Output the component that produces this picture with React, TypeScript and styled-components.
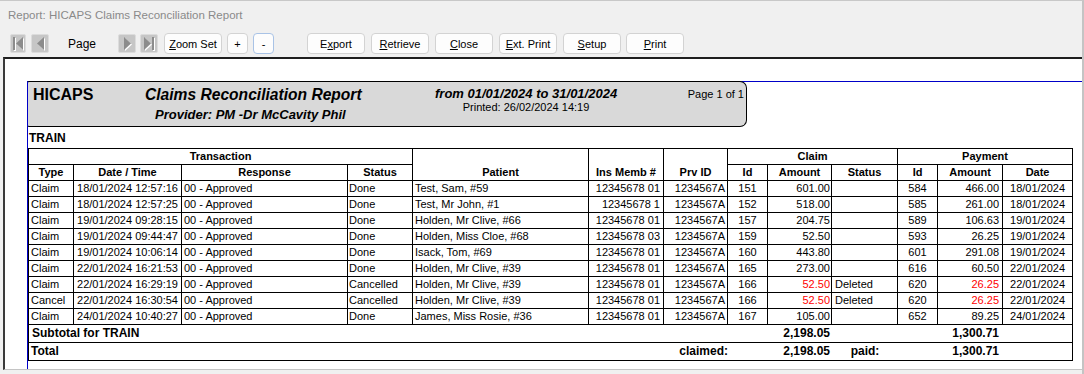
import React from 'react';
import styled, { createGlobalStyle } from 'styled-components';

const Global = createGlobalStyle`
  html, body { margin: 0; padding: 0; background: #f0f0f0; }
  body { font-family: "Liberation Sans", Arial, sans-serif; }
`;

const Window = styled.div`
  width: 1084px;
  height: 374px;
  box-sizing: border-box;
  border-top: 1px solid #c8c8c8;
  border-right: 2px solid #c4c4c4;
  background: #f0f0f0;
  display: flex;
  flex-direction: column;
  overflow: hidden;
`;

const TitleBar = styled.div`
  height: 32px;
  box-sizing: border-box;
  padding: 7px 0 0 8px;
  font-family: "Segoe UI", "Liberation Sans", Arial, sans-serif;
  font-size: 11.5px;
  line-height: 14px;
  color: #8a8a8a;
`;

const Toolbar = styled.div`
  height: 21px;
  display: flex;
  align-items: center;
  padding-left: 10px;
`;

const NavButton = styled.div<{ $w: number; $ml?: number }>`
  width: ${(p) => p.$w}px;
  height: 19px;
  margin-left: ${(p) => p.$ml ?? 0}px;
  box-sizing: border-box;
  background: #c6c6c6;
  border: 1px solid #dcdcdc;
  border-radius: 2px;
  display: flex;
  align-items: center;
  justify-content: center;
`;

const PageLabel = styled.div`
  width: 50px;
  margin-left: 19px;
  font-size: 12px;
  color: #000;
`;

const Button = styled.div<{ $w: number; $ml: number; $focus?: boolean }>`
  width: ${(p) => p.$w}px;
  height: 21px;
  margin-left: ${(p) => p.$ml}px;
  box-sizing: border-box;
  background: #fdfdfd;
  border: 1px solid ${(p) => (p.$focus ? '#a9c3e6' : '#d3d3d3')};
  border-radius: 4px;
  display: flex;
  align-items: center;
  justify-content: center;
  font-size: 11px;
  color: #000;
`;

const Mn = styled.span`
  text-decoration: underline;
`;

const ReportPanel = styled.div`
  margin: 3px 0 0 3px;
  height: 313px;
  box-sizing: border-box;
  background: #fff;
  border-top: 2px solid #1e1e1e;
  border-left: 2px solid #3a3a3a;
  border-bottom: 1px solid #c4c4c4;
  display: flex;
  flex-direction: column;
  overflow: hidden;
`;

const Page = styled.div`
  margin: 22px 0 0 22px;
  flex: 1;
  border-top: 1px solid #0000c8;
  border-left: 1px solid #0000c8;
  color: #000;
`;

const HeaderBox = styled.div`
  margin: -1px 0 0 -1px;
  width: 720px;
  height: 46px;
  box-sizing: border-box;
  background: #d9d9d9;
  border: 1px solid #000;
  border-left-color: #0000c8;
  border-radius: 2px 7px 7px 2px;
  display: flex;
  align-items: flex-start;
`;

const Brand = styled.div`
  width: 117px;
  box-sizing: border-box;
  padding: 4px 0 0 5px;
  font-size: 16px;
  line-height: 18px;
  font-weight: bold;
`;

const TitleBlock = styled.div`
  width: 290px;
  padding-top: 4px;
  display: flex;
  flex-direction: column;
`;

const ReportTitle = styled.div`
  font-size: 15.6px;
  line-height: 18px;
  font-weight: bold;
  font-style: italic;
  white-space: nowrap;
`;

const Provider = styled.div`
  margin: 3px 0 0 10px;
  font-size: 13px;
  line-height: 15px;
  font-weight: bold;
  font-style: italic;
  white-space: nowrap;
`;

const DateBlock = styled.div`
  width: 182px;
  padding-top: 5px;
  text-align: center;
`;

const DateRange = styled.div`
  font-size: 13px;
  line-height: 14px;
  font-weight: bold;
  font-style: italic;
  white-space: nowrap;
`;

const Printed = styled.div`
  font-size: 11px;
  line-height: 12px;
  white-space: nowrap;
`;

const PageNo = styled.div`
  margin-left: auto;
  padding: 6px 2px 0 0;
  font-size: 11px;
  line-height: 12px;
`;

const GroupLabel = styled.div`
  margin-top: 4px;
  padding-left: 1px;
  font-size: 12px;
  line-height: 14px;
  font-weight: bold;
`;

const Table = styled.table`
  margin-top: 3px;
  border-collapse: separate;
  border-spacing: 0;
  table-layout: fixed;
  width: 1045px;
  border-top: 1px solid #000;
  border-left: 1px solid #000;
  font-size: 11px;
  color: #000;
`;

const Row = styled.tr<{ $h: number }>`
  height: ${(p) => p.$h}px;
`;

const Th = styled.th<{ $valign?: string }>`
  border-right: 1px solid #000;
  border-bottom: 1px solid #000;
  padding: 0;
  font-weight: bold;
  text-align: center;
  line-height: 15px;
  vertical-align: ${(p) => p.$valign ?? 'middle'};
  white-space: nowrap;
  overflow: hidden;
`;

const Td = styled.td<{
  $align: string;
  $pl?: number;
  $pr?: number;
  $red?: boolean;
  $bold?: boolean;
  $open?: boolean;
}>`
  border-right: ${(p) => (p.$open ? 'none' : '1px solid #000')};
  border-bottom: 1px solid #000;
  padding: 0 ${(p) => p.$pr ?? 2}px 0 ${(p) => p.$pl ?? 2}px;
  text-align: ${(p) => p.$align};
  color: ${(p) => (p.$red ? '#ff0000' : '#000')};
  font-weight: ${(p) => (p.$bold ? 'bold' : 'normal')};
  font-size: ${(p) => (p.$bold ? '12px' : '11px')};
  line-height: ${(p) => (p.$bold ? '17px' : '15px')};
  vertical-align: middle;
  white-space: nowrap;
  overflow: hidden;
`;

const NAV = '#8c8c8c';

const FirstIcon = () => (
  <svg width="12" height="14" viewBox="0 0 12 14">
    <rect x="2" y="1" width="2" height="13" fill="#fff" />
    <polygon points="12,1 5,7.5 12,14" fill="#fff" />
    <rect x="1" y="0" width="2" height="13" fill={NAV} />
    <polygon points="11,0 4,6.5 11,13" fill={NAV} />
  </svg>
);
const PrevIcon = () => (
  <svg width="9" height="14" viewBox="0 0 9 14">
    <polygon points="9,1 2,7.5 9,14" fill="#fff" />
    <polygon points="8,0 1,6.5 8,13" fill={NAV} />
  </svg>
);
const NextIcon = () => (
  <svg width="9" height="14" viewBox="0 0 9 14">
    <polygon points="2,1 9,7.5 2,14" fill="#fff" />
    <polygon points="1,0 8,6.5 1,13" fill={NAV} />
  </svg>
);
const LastIcon = () => (
  <svg width="12" height="14" viewBox="0 0 12 14">
    <polygon points="2,1 9,7.5 2,14" fill="#fff" />
    <rect x="10" y="1" width="2" height="13" fill="#fff" />
    <polygon points="1,0 8,6.5 1,13" fill={NAV} />
    <rect x="9" y="0" width="2" height="13" fill={NAV} />
  </svg>
);

type ColSpec = { w: number; align: string; pl?: number; pr?: number };
const cols: ColSpec[] = [
  { w: 45, align: 'left', pl: 2 },
  { w: 108, align: 'center' },
  { w: 166, align: 'left', pl: 2 },
  { w: 65, align: 'left', pl: 1 },
  { w: 176, align: 'left', pl: 2 },
  { w: 75, align: 'right', pr: 3 },
  { w: 64, align: 'right', pr: 2 },
  { w: 40, align: 'center' },
  { w: 64, align: 'right', pr: 1 },
  { w: 66, align: 'left', pl: 3 },
  { w: 40, align: 'center' },
  { w: 65, align: 'right', pr: 3 },
  { w: 70, align: 'center' },
];

type DataRow = { cells: string[]; red?: boolean };
const rows: DataRow[] = [
  { cells: ['Claim', '18/01/2024 12:57:16', '00 - Approved', 'Done', 'Test, Sam, #59', '12345678 01', '1234567A', '151', '601.00', '', '584', '466.00', '18/01/2024'] },
  { cells: ['Claim', '18/01/2024 12:57:25', '00 - Approved', 'Done', 'Test, Mr John, #1', '12345678 1', '1234567A', '152', '518.00', '', '585', '261.00', '18/01/2024'] },
  { cells: ['Claim', '19/01/2024 09:28:15', '00 - Approved', 'Done', 'Holden, Mr Clive, #66', '12345678 01', '1234567A', '157', '204.75', '', '589', '106.63', '19/01/2024'] },
  { cells: ['Claim', '19/01/2024 09:44:47', '00 - Approved', 'Done', 'Holden, Miss Cloe, #68', '12345678 03', '1234567A', '159', '52.50', '', '593', '26.25', '19/01/2024'] },
  { cells: ['Claim', '19/01/2024 10:06:14', '00 - Approved', 'Done', 'Isack, Tom, #69', '12345678 01', '1234567A', '160', '443.80', '', '601', '291.08', '19/01/2024'] },
  { cells: ['Claim', '22/01/2024 16:21:53', '00 - Approved', 'Done', 'Holden, Mr Clive, #39', '12345678 01', '1234567A', '165', '273.00', '', '616', '60.50', '22/01/2024'] },
  { cells: ['Claim', '22/01/2024 16:29:19', '00 - Approved', 'Cancelled', 'Holden, Mr Clive, #39', '12345678 01', '1234567A', '166', '52.50', 'Deleted', '620', '26.25', '22/01/2024'], red: true },
  { cells: ['Cancel', '22/01/2024 16:30:54', '00 - Approved', 'Cancelled', 'Holden, Mr Clive, #39', '12345678 01', '1234567A', '166', '52.50', 'Deleted', '620', '26.25', '22/01/2024'], red: true },
  { cells: ['Claim', '24/01/2024 10:40:27', '00 - Approved', 'Done', 'James, Miss Rosie, #36', '12345678 01', '1234567A', '167', '105.00', '', '652', '89.25', '24/01/2024'] },
];

const redCols = new Set([8, 11]);

export default function App() {
  return (
    <>
      <Global />
      <Window>
        <TitleBar>Report: HICAPS Claims Reconciliation Report</TitleBar>
        <Toolbar>
          <NavButton $w={16}><FirstIcon /></NavButton>
          <NavButton $w={18} $ml={5}><PrevIcon /></NavButton>
          <PageLabel>Page</PageLabel>
          <NavButton $w={18}><NextIcon /></NavButton>
          <NavButton $w={18} $ml={4}><LastIcon /></NavButton>
          <Button $w={58} $ml={6}><span><Mn>Z</Mn>oom Set</span></Button>
          <Button $w={21} $ml={5}>+</Button>
          <Button $w={21} $ml={5} $focus>-</Button>
          <Button $w={58} $ml={33}><span>E<Mn>x</Mn>port</span></Button>
          <Button $w={58} $ml={6}><span><Mn>R</Mn>etrieve</span></Button>
          <Button $w={58} $ml={6}><span><Mn>C</Mn>lose</span></Button>
          <Button $w={58} $ml={6}><span><Mn>E</Mn>xt. Print</span></Button>
          <Button $w={58} $ml={6}><span><Mn>S</Mn>etup</span></Button>
          <Button $w={58} $ml={5}><span><Mn>P</Mn>rint</span></Button>
        </Toolbar>
        <ReportPanel>
          <Page>
            <HeaderBox>
              <Brand>HICAPS</Brand>
              <TitleBlock>
                <ReportTitle>Claims Reconciliation Report</ReportTitle>
                <Provider>Provider: PM -Dr McCavity Phil</Provider>
              </TitleBlock>
              <DateBlock>
                <DateRange>from 01/01/2024 to 31/01/2024</DateRange>
                <Printed>Printed: 26/02/2024 14:19</Printed>
              </DateBlock>
              <PageNo>Page 1 of 1</PageNo>
            </HeaderBox>
            <GroupLabel>TRAIN</GroupLabel>
            <Table>
              <colgroup>
                {cols.map((c, i) => (
                  <col key={i} style={{ width: c.w }} />
                ))}
              </colgroup>
              <thead>
                <Row $h={16}>
                  <Th colSpan={4}>Transaction</Th>
                  <Th rowSpan={2} $valign="bottom">Patient</Th>
                  <Th rowSpan={2} $valign="bottom">Ins Memb #</Th>
                  <Th rowSpan={2} $valign="bottom">Prv ID</Th>
                  <Th colSpan={3}>Claim</Th>
                  <Th colSpan={3}>Payment</Th>
                </Row>
                <Row $h={16}>
                  <Th>Type</Th>
                  <Th>Date / Time</Th>
                  <Th>Response</Th>
                  <Th>Status</Th>
                  <Th>Id</Th>
                  <Th>Amount</Th>
                  <Th>Status</Th>
                  <Th>Id</Th>
                  <Th>Amount</Th>
                  <Th>Date</Th>
                </Row>
              </thead>
              <tbody>
                {rows.map((r, ri) => (
                  <Row $h={16} key={ri}>
                    {r.cells.map((v, ci) => (
                      <Td
                        key={ci}
                        $align={cols[ci].align}
                        $pl={cols[ci].pl}
                        $pr={cols[ci].pr}
                        $red={r.red && redCols.has(ci)}
                      >
                        {v}
                      </Td>
                    ))}
                  </Row>
                ))}
                <Row $h={18}>
                  <Td colSpan={8} $align="left" $pl={3} $bold $open>Subtotal for TRAIN</Td>
                  <Td $align="right" $pr={2} $bold $open>2,198.05</Td>
                  <Td colSpan={2} $align="left" $bold $open></Td>
                  <Td $align="right" $pr={4} $bold $open>1,300.71</Td>
                  <Td $align="left" $bold></Td>
                </Row>
                <Row $h={18}>
                  <Td colSpan={6} $align="left" $pl={2} $bold $open>Total</Td>
                  <Td $align="right" $pr={0} $bold $open>claimed:</Td>
                  <Td $align="left" $bold $open></Td>
                  <Td $align="right" $pr={2} $bold $open>2,198.05</Td>
                  <Td $align="center" $bold $open>paid:</Td>
                  <Td $align="left" $bold $open></Td>
                  <Td $align="right" $pr={4} $bold $open>1,300.71</Td>
                  <Td $align="left" $bold></Td>
                </Row>
              </tbody>
            </Table>
          </Page>
        </ReportPanel>
      </Window>
    </>
  );
}
